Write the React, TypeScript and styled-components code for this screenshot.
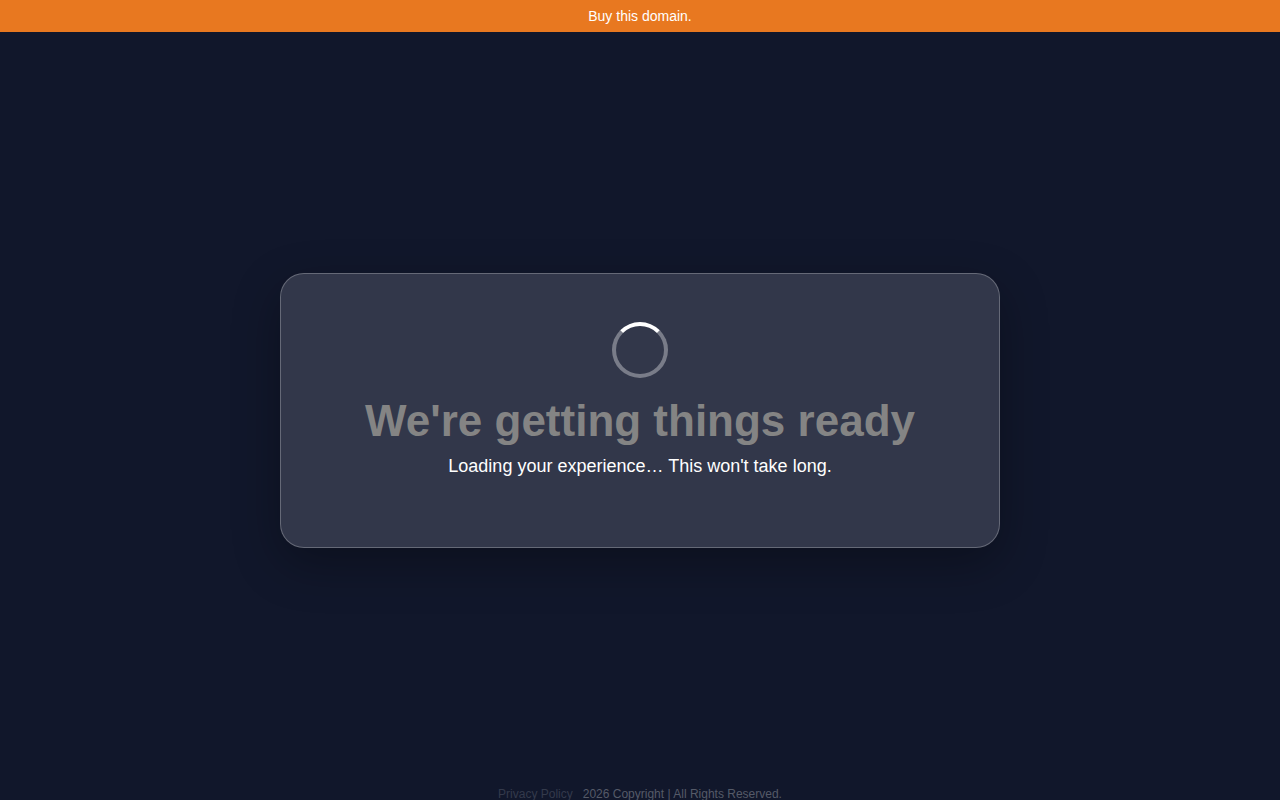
import React from "react";
import styled, { createGlobalStyle } from "styled-components";

const GlobalStyle = createGlobalStyle`
  *, *::before, *::after { box-sizing: border-box; }
  body {
    margin: 0;
    background: #11172b;
    color: #ffffff;
    font-family: "Liberation Sans", Arial, Helvetica, sans-serif;
  }
`;

const Page = styled.div`
  display: flex;
  flex-direction: column;
  min-height: 100vh;
`;

const Banner = styled.header`
  padding: 8px;
  background: #e87820;
  font-size: 14px;
  line-height: 16px;
  text-align: center;
`;

const BannerLink = styled.a`
  color: #ffffff;
  text-decoration: none;
`;

const Main = styled.main`
  flex: 1;
  display: flex;
  align-items: center;
  justify-content: center;
`;

const Card = styled.section`
  display: flex;
  flex-direction: column;
  align-items: center;
  width: 100%;
  max-width: 720px;
  padding: 48px 48px 67px;
  border: 1px solid rgba(255, 255, 255, 0.25);
  border-radius: 24px;
  background: #32374a;
  box-shadow: 0 16px 48px rgba(0, 0, 0, 0.3);
  text-align: center;
`;

const Spinner = styled.div`
  width: 56px;
  height: 56px;
  border: 4px solid rgba(255, 255, 255, 0.35);
  border-top-color: #ffffff;
  border-radius: 50%;
`;

const Title = styled.h1`
  margin: 17px 0 5px;
  color: #848484;
  font-size: 44px;
  line-height: 52px;
  font-weight: 700;
`;

const Message = styled.p`
  margin: 0;
  font-size: 18px;
  line-height: 28px;
`;

const Footer = styled.footer`
  display: flex;
  justify-content: center;
  gap: 10px;
  color: #555a68;
  font-size: 12px;
  line-height: 12px;
`;

const PolicyLink = styled.a`
  color: #343a4b;
  text-decoration: none;
`;

export default function App() {
  return (
    <Page>
      <GlobalStyle />
      <Banner>
        <BannerLink href="#">Buy this domain.</BannerLink>
      </Banner>
      <Main>
        <Card>
          <Spinner role="status" aria-label="Loading" />
          <Title>We're getting things ready</Title>
          <Message>Loading your experience… This won't take long.</Message>
        </Card>
      </Main>
      <Footer>
        <PolicyLink href="#">Privacy Policy</PolicyLink>
        <span>2026 Copyright | All Rights Reserved.</span>
      </Footer>
    </Page>
  );
}
